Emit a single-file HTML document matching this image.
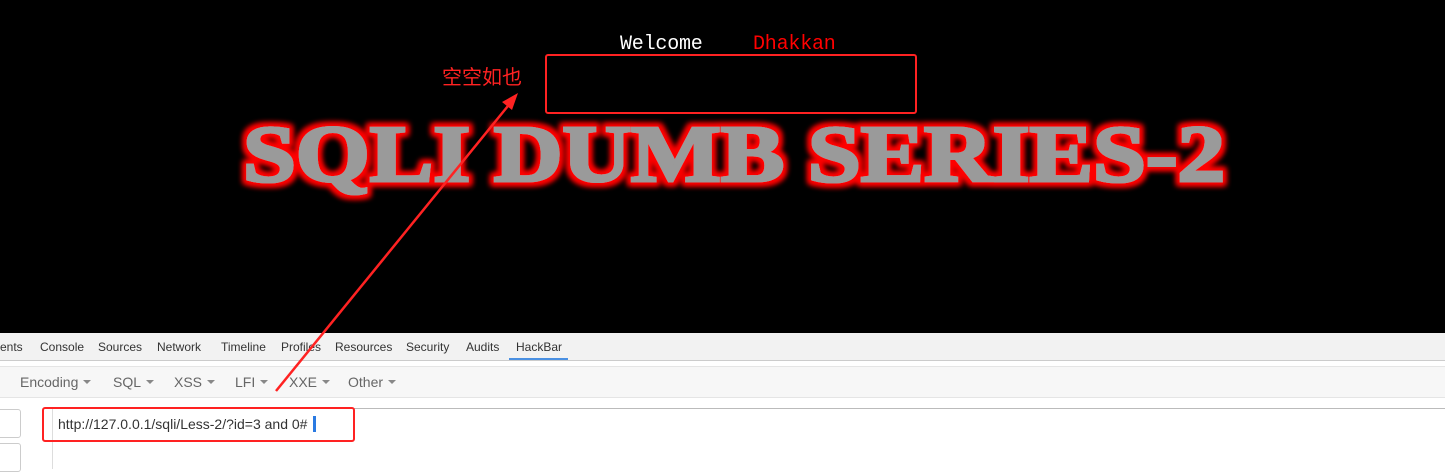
<!DOCTYPE html>
<html><head><meta charset="utf-8"><style>
body{margin:0;width:1445px;height:463px;overflow:hidden;background:#fff;position:relative;font-family:"Liberation Sans",sans-serif}
.a{position:absolute}
.tabs span{position:absolute;top:7px;font-size:12px;color:#333}
.tb span{position:absolute;top:8px;font-size:14px;color:#666}
.tb span:after{content:"";display:inline-block;margin-left:5px;vertical-align:3px;border-left:4px solid transparent;border-right:4px solid transparent;border-top:4px solid #888}
</style></head><body>
<div class="a" style="left:0;top:0;width:1445px;height:333px;background:#000"></div>
<div class="a" style="left:620px;top:33px;font:20px 'Liberation Mono',monospace;color:#fff;letter-spacing:-0.2px">Welcome</div>
<div class="a" style="left:753px;top:33px;font:20px 'Liberation Mono',monospace;color:#f00;letter-spacing:-0.2px">Dhakkan</div>
<div class="a" style="left:442px;top:61px;font:20px 'Liberation Sans','Noto Sans CJK SC',sans-serif;color:#f22">空空如也</div>
<div class="a" style="left:545px;top:54px;width:368px;height:56px;border:2.5px solid #f22;border-radius:3px"></div>
<svg class="a" style="left:0;top:0" width="1445" height="333">
<defs><filter id="g" x="-5%" y="-30%" width="110%" height="160%"><feMorphology in="SourceAlpha" operator="dilate" radius="3" result="d"/><feGaussianBlur in="d" stdDeviation="3" result="b"/><feFlood flood-color="#f00"/><feComposite in2="b" operator="in" result="r"/><feMerge><feMergeNode in="r"/><feMergeNode in="r"/><feMergeNode in="SourceGraphic"/></feMerge></filter></defs>
<text x="243" y="181" font-family="Liberation Serif" font-weight="bold" font-size="80" fill="#9a9a9a" stroke="#9a9a9a" stroke-width="3" textLength="982" lengthAdjust="spacingAndGlyphs" filter="url(#g)">SQLI DUMB SERIES-2</text>
</svg>
<div class="a" style="left:0;top:333px;width:1445px;height:27px;background:#f2f2f2;border-bottom:1px solid #ccc"></div>
<div class="tabs a" style="left:0;top:333px;width:1445px;height:27px">
<span style="left:0">ents</span><span style="left:40px">Console</span><span style="left:98px">Sources</span><span style="left:157px">Network</span><span style="left:221px">Timeline</span><span style="left:281px">Profiles</span><span style="left:335px">Resources</span><span style="left:406px">Security</span><span style="left:466px">Audits</span><span style="left:516px">HackBar</span>
</div>
<div class="a" style="left:509px;top:358px;width:59px;height:2px;background:#4a90e2"></div>
<div class="a" style="left:0;top:366px;width:1445px;height:30px;background:#f7f7f7;border-top:1px solid #e5e5e5;border-bottom:1px solid #e5e5e5"></div>
<div class="tb a" style="left:0;top:366px;width:1445px;height:30px">
<span style="left:20px">Encoding</span><span style="left:113px">SQL</span><span style="left:174px">XSS</span><span style="left:235px">LFI</span><span style="left:289px">XXE</span><span style="left:348px">Other</span>
</div>
<div class="a" style="left:-5px;top:409px;width:24px;height:27px;border:1px solid #ccc;border-radius:3px"></div>
<div class="a" style="left:-5px;top:443px;width:24px;height:27px;border:1px solid #ccc;border-radius:3px"></div>
<div class="a" style="left:52px;top:408px;width:1393px;height:60px;border-top:1px solid #bbb;border-left:1px solid #ddd"></div>
<div class="a" style="left:58px;top:416px;font-size:14px;color:#333">http://127.0.0.1/sqli/Less-2/?id=3 and 0#</div>
<div class="a" style="left:313px;top:416px;width:3px;height:16px;background:#2a7ae2"></div>
<div class="a" style="left:42px;top:407px;width:309px;height:31px;border:2.5px solid #f22;border-radius:3px"></div>
<svg class="a" style="left:0;top:0" width="1445" height="463">
<line x1="276" y1="391" x2="512" y2="101" stroke="#f22" stroke-width="2.5"/>
<polygon points="518,93 502,102 512,110" fill="#f22"/>
</svg>
</body></html>
